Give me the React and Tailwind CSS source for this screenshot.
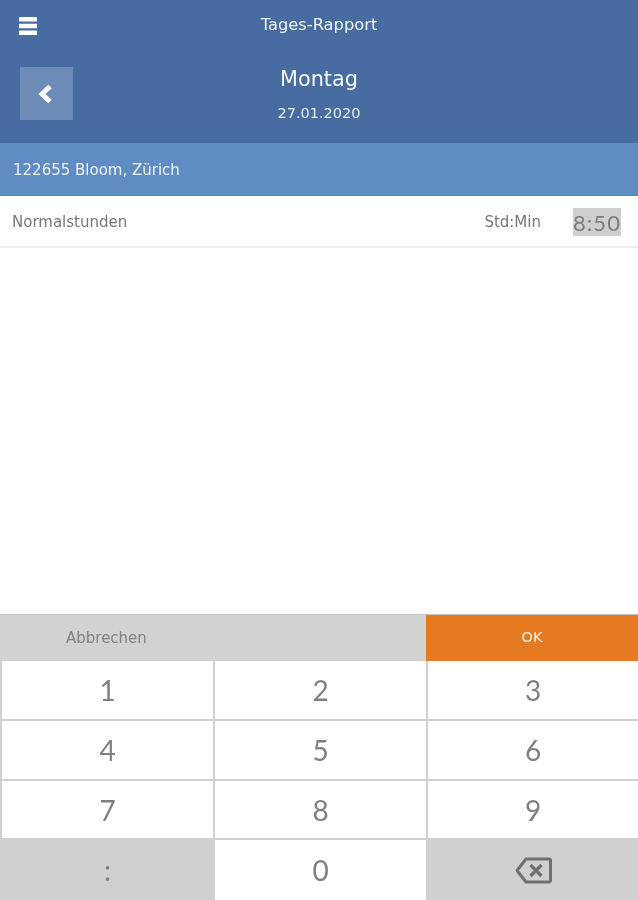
const Key = ({ children, gray }) => (
  <div className={`flex items-center justify-center h-full ${gray ? "bg-[#d0d0d0]" : "bg-white"} text-[#808080] text-[28px] font-['Lato',sans-serif]`}>
    {children}
  </div>
);

export default function App() {
  return (
    <div className="flex flex-col h-[900px] w-[638px] bg-white overflow-hidden font-['DejaVu_Sans',sans-serif] blur-[0.4px]">
      <header className="h-[143px] bg-[#466ca2] text-white flex flex-col shrink-0">
        <div className="relative flex items-center justify-center h-[50px] text-[16.3px] text-[#f0f4f8]">
          <svg className="absolute left-[19px] top-[17px]" width="18" height="18" viewBox="0 0 18 18">
            <rect x="0" y="0" width="18" height="4.4" rx="0.5" fill="#fff" />
            <rect x="0" y="6.8" width="18" height="4.4" rx="0.5" fill="#fff" />
            <rect x="0" y="13.6" width="18" height="4.4" rx="0.5" fill="#fff" />
          </svg>
          <span>Tages-Rapport</span>
        </div>
        <div className="relative flex flex-col items-center pt-[15px]">
          <button className="absolute left-[20px] top-[17px] w-[53px] h-[53px] bg-[#6c8bb6] flex items-center justify-center">
            <svg className="mr-[4px]" width="16" height="20" viewBox="0 0 16 20">
              <path d="M13 2.5 L5 10 L13 17.5" fill="none" stroke="#fff" strokeWidth="5" />
            </svg>
          </button>
          <div className="text-[20.8px] leading-[28px] text-[#f4f7fa]">Montag</div>
          <div className="text-[14.5px] leading-[20px] mt-[10px] text-[#e8edf3]">27.01.2020</div>
        </div>
      </header>
      <div className="h-[53px] bg-[#5f8dc3] border-b border-[#5583b9] flex items-center pl-[13px] pt-[3px] text-[15px] text-[#eef3f8] shrink-0">
        122655 Bloom, Zürich
      </div>
      <div className="h-[52px] bg-white border-b-2 border-[#eeeeee] flex items-center pl-[12px] pr-[17px] pt-[2px] text-[15px] text-[#777777] shrink-0">
        <span className="flex-1">Normalstunden</span>
        <span className="mr-[32px]">Std:Min</span>
        <span className="bg-[#cfcfcf] w-[48px] h-[28px] flex items-center justify-center text-[22px] tracking-[1px] text-[#7c7c7c] font-['Lato',sans-serif]">8:50</span>
      </div>
      <div className="flex-1" />
      <div className="shrink-0 border-t border-[#c4c4c4]">
        <div className="grid grid-cols-[426px_1fr] h-[46px] text-[15px]">
          <div className="bg-[#d2d2d2] text-[#828282] flex items-center pl-[66px]">Abbrechen</div>
          <div className="bg-[#e67a20] text-[#fdf3e8] flex items-center justify-center text-[14.5px]">OK</div>
        </div>
        <div className="grid grid-cols-[213px_213px_1fr] grid-rows-[60px_60px_59px_60px] bg-[#d0d0d0] pl-[2px] h-[239px]">
          <div className="border-r-2 border-b-2 border-[#d0d0d0]"><Key>1</Key></div>
          <div className="border-r-2 border-b-2 border-[#d0d0d0]"><Key>2</Key></div>
          <div className="border-b-2 border-[#d0d0d0]"><Key>3</Key></div>
          <div className="border-r-2 border-b-2 border-[#d0d0d0]"><Key>4</Key></div>
          <div className="border-r-2 border-b-2 border-[#d0d0d0]"><Key>5</Key></div>
          <div className="border-b-2 border-[#d0d0d0]"><Key>6</Key></div>
          <div className="border-r-2 border-b-2 border-[#d0d0d0]"><Key>7</Key></div>
          <div className="border-r-2 border-b-2 border-[#d0d0d0]"><Key>8</Key></div>
          <div className="border-b-2 border-[#d0d0d0]"><Key>9</Key></div>
          <div className="border-r-2 border-[#d0d0d0]"><Key gray>:</Key></div>
          <div className="border-r-2 border-[#d0d0d0]"><Key>0</Key></div>
          <Key gray>
            <svg width="37" height="27" viewBox="0 0 37 27">
              <path d="M11 2 H34 a1.5 1.5 0 0 1 1.5 1.5 V23.5 a1.5 1.5 0 0 1 -1.5 1.5 H11 L2 13.5 Z" fill="none" stroke="#707070" strokeWidth="3" strokeLinejoin="round" />
              <path d="M15.5 8 L26.5 19 M26.5 8 L15.5 19" fill="none" stroke="#707070" strokeWidth="3.4" />
            </svg>
          </Key>
        </div>
      </div>
    </div>
  );
}
